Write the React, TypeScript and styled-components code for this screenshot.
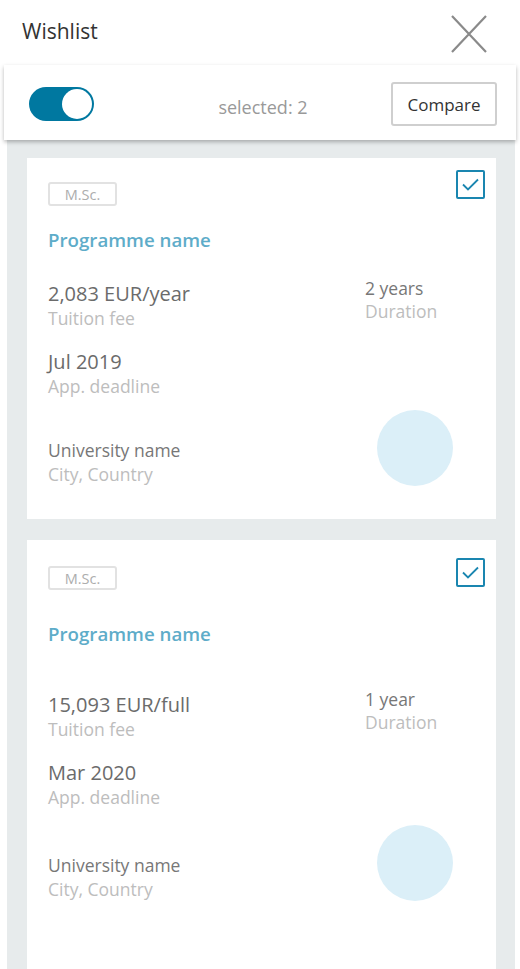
import React from "react";
import styled, { createGlobalStyle } from "styled-components";

const GlobalStyle = createGlobalStyle`
  html, body {
    margin: 0;
    padding: 0;
    background: #ffffff;
    overflow: hidden;
  }
  body {
    font-family: "Open Sans", "Noto Sans", sans-serif;
  }
`;

const Page = styled.div`
  width: 520px;
  display: flex;
  flex-direction: column;
`;

const Header = styled.header`
  height: 65px;
  display: flex;
  align-items: center;
  justify-content: space-between;
  padding: 0 33px 3px 22px;
  box-sizing: border-box;
`;

const Title = styled.h1`
  margin: 0;
  font-size: 21px;
  font-weight: 400;
  color: #333333;
`;

const CloseButton = styled.button`
  width: 36px;
  height: 38px;
  padding: 0;
  border: none;
  background: none;
  display: flex;
  margin-top: 5px;
`;

const Toolbar = styled.div`
  position: relative;
  z-index: 1;
  margin: 0 4px;
  height: 75px;
  padding: 3px 19px 0 25px;
  box-sizing: border-box;
  background: #ffffff;
  box-shadow: 0 2px 4px rgba(0, 0, 0, 0.28);
  display: grid;
  grid-template-columns: 1fr auto 1fr;
  align-items: center;
`;

const Toggle = styled.div<{ $on: boolean }>`
  width: 65px;
  height: 34px;
  border-radius: 17px;
  background: ${(p) => (p.$on ? "#0078a0" : "#cccccc")};
  display: flex;
  align-items: center;
  justify-content: ${(p) => (p.$on ? "flex-end" : "flex-start")};
  padding: 0 2px;
  box-sizing: border-box;
  justify-self: start;
`;

const Knob = styled.span`
  width: 30px;
  height: 30px;
  border-radius: 50%;
  background: #ffffff;
`;

const Selected = styled.span`
  font-size: 18px;
  color: #999999;
  padding-top: 6px;
`;

const CompareButton = styled.button`
  justify-self: end;
  width: 106px;
  height: 44px;
  border: 2px solid #cfcfcf;
  border-radius: 3px;
  background: #ffffff;
  font-family: "Open Sans", sans-serif;
  font-size: 17px;
  font-weight: 500;
  color: #333333;
  padding: 0;
`;

const List = styled.div`
  margin: 0 5px 0 7px;
  background: #e7ebec;
  padding: 18px 19px 0 20px;
  display: flex;
  flex-direction: column;
  gap: 21px;
`;

const Card = styled.article<{ $top: number; $bottom: number }>`
  position: relative;
  background: #ffffff;
  padding: ${(p) => p.$top}px 0 ${(p) => p.$bottom}px 21px;
  display: flex;
  flex-direction: column;
  align-items: flex-start;
`;

const CheckBox = styled.span<{ $top: number }>`
  position: absolute;
  top: ${(p) => p.$top}px;
  right: 11px;
  width: 29px;
  height: 29px;
  box-sizing: border-box;
  border: 2px solid #1a86b0;
  border-radius: 2px;
  display: flex;
  align-items: center;
  justify-content: center;
`;

const Badge = styled.span`
  width: 69px;
  height: 24px;
  box-sizing: border-box;
  border: 2px solid #e2e2e2;
  border-radius: 3px;
  font-size: 14.5px;
  color: #adadad;
  display: flex;
  align-items: center;
  justify-content: center;
`;

const ProgrammeName = styled.h2<{ $gap: number }>`
  margin: ${(p) => p.$gap}px 0 0;
  font-size: 18.7px;
  line-height: 24px;
  font-weight: 600;
  color: #5eacc9;
`;

const Row = styled.div<{ $gap: number; $align?: string }>`
  margin-top: ${(p) => p.$gap}px;
  align-self: stretch;
  display: flex;
  align-items: ${(p) => p.$align || "flex-start"};
`;

const Fact = styled.div`
  flex: 1;
  display: flex;
  flex-direction: column;
`;

const SideFact = styled.div`
  width: 131px;
  margin-top: -5px;
  display: flex;
  flex-direction: column;
`;

const Value = styled.span<{ $small?: boolean }>`
  font-size: ${(p) => (p.$small ? "17.5px" : "20px")};
  line-height: ${(p) => (p.$small ? "24px" : "25px")};
  color: ${(p) => (p.$small ? "#777777" : "#6b6b6b")};
`;

const Label = styled.span<{ $tight?: boolean }>`
  font-size: 17.5px;
  line-height: ${(p) => (p.$tight ? "22px" : "24px")};
  color: #bdbdbd;
`;

const LogoSlot = styled.div`
  width: 131px;
  display: flex;
`;

const Logo = styled.div`
  margin-left: 12px;
  width: 76px;
  height: 76px;
  border-radius: 50%;
  background: #dbeff8;
`;

interface Programme {
  fee: string;
  duration: string;
  deadline: string;
  top: number;
  checkTop: number;
  nameGap: number;
  feeGap: number;
  uniGap: number;
  bottom: number;
}

const programmes: Programme[] = [
  {
    fee: "2,083 EUR/year",
    duration: "2 years",
    deadline: "Jul 2019",
    top: 24,
    checkTop: 12,
    nameGap: 22,
    feeGap: 29,
    uniGap: 12,
    bottom: 33,
  },
  {
    fee: "15,093 EUR/full",
    duration: "1 year",
    deadline: "Mar 2020",
    top: 26,
    checkTop: 18,
    nameGap: 32,
    feeGap: 46,
    uniGap: 16,
    bottom: 120,
  },
];

function CloseIcon() {
  return (
    <svg width="36" height="38" viewBox="0 0 36 38">
      <path d="M1 1 L35 37 M35 1 L1 37" stroke="#8a8a8a" strokeWidth="2.2" fill="none" />
    </svg>
  );
}

function CheckIcon() {
  return (
    <svg width="17" height="13" viewBox="0 0 17 13">
      <path d="M1 6.5 L6 11.5 L16 1.5" stroke="#1a86b0" strokeWidth="1.8" fill="none" />
    </svg>
  );
}

function ProgrammeCard({ p }: { p: Programme }) {
  return (
    <Card $top={p.top} $bottom={p.bottom}>
      <CheckBox $top={p.checkTop}>
        <CheckIcon />
      </CheckBox>
      <Badge>M.Sc.</Badge>
      <ProgrammeName $gap={p.nameGap}>Programme name</ProgrammeName>
      <Row $gap={p.feeGap}>
        <Fact>
          <Value>{p.fee}</Value>
          <Label>Tuition fee</Label>
        </Fact>
        <SideFact>
          <Value $small>{p.duration}</Value>
          <Label $tight>Duration</Label>
        </SideFact>
      </Row>
      <Row $gap={19}>
        <Fact>
          <Value>{p.deadline}</Value>
          <Label>App. deadline</Label>
        </Fact>
      </Row>
      <Row $gap={p.uniGap} $align="flex-end">
        <Fact>
          <Value $small>University name</Value>
          <Label>City, Country</Label>
        </Fact>
        <LogoSlot>
          <Logo />
        </LogoSlot>
      </Row>
    </Card>
  );
}

function App() {
  const [compareMode, setCompareMode] = React.useState(true);

  return (
    <Page>
      <GlobalStyle />
      <Header>
        <Title>Wishlist</Title>
        <CloseButton aria-label="Close">
          <CloseIcon />
        </CloseButton>
      </Header>
      <Toolbar>
        <Toggle $on={compareMode} onClick={() => setCompareMode(!compareMode)}>
          <Knob />
        </Toggle>
        <Selected>selected: 2</Selected>
        <CompareButton>Compare</CompareButton>
      </Toolbar>
      <List>
        {programmes.map((p) => (
          <ProgrammeCard key={p.fee} p={p} />
        ))}
      </List>
    </Page>
  );
}

export default App;
